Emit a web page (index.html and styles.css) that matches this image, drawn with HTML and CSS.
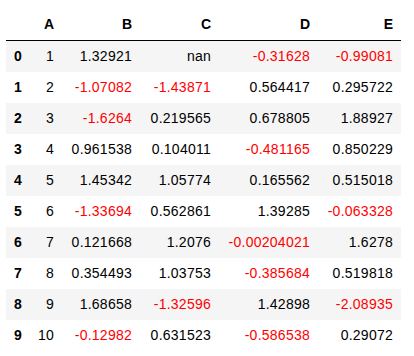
FILE: index.html
```html
<!DOCTYPE html>
<html lang="en">
<head>
  <meta charset="UTF-8" />
  <title>DataFrame</title>
  <link rel="stylesheet" href="styles.css">
</head>
<body>
  <table class="dataframe">
    <colgroup>
      <col class="col-index" />
      <col class="col-a" />
      <col class="col-b" />
      <col class="col-c" />
      <col class="col-d" />
      <col class="col-e" />
    </colgroup>
    <thead>
      <tr>
        <th class="blank"></th>
        <th>A</th>
        <th>B</th>
        <th>C</th>
        <th>D</th>
        <th>E</th>
      </tr>
    </thead>
    <tbody>
      <tr>
        <th class="row-heading">0</th>
        <td>1</td>
        <td>1.32921</td>
        <td>nan</td>
        <td class="neg">-0.31628</td>
        <td class="neg">-0.99081</td>
      </tr>
      <tr>
        <th class="row-heading">1</th>
        <td>2</td>
        <td class="neg">-1.07082</td>
        <td class="neg">-1.43871</td>
        <td>0.564417</td>
        <td>0.295722</td>
      </tr>
      <tr>
        <th class="row-heading">2</th>
        <td>3</td>
        <td class="neg">-1.6264</td>
        <td>0.219565</td>
        <td>0.678805</td>
        <td>1.88927</td>
      </tr>
      <tr>
        <th class="row-heading">3</th>
        <td>4</td>
        <td>0.961538</td>
        <td>0.104011</td>
        <td class="neg">-0.481165</td>
        <td>0.850229</td>
      </tr>
      <tr>
        <th class="row-heading">4</th>
        <td>5</td>
        <td>1.45342</td>
        <td>1.05774</td>
        <td>0.165562</td>
        <td>0.515018</td>
      </tr>
      <tr>
        <th class="row-heading">5</th>
        <td>6</td>
        <td class="neg">-1.33694</td>
        <td>0.562861</td>
        <td>1.39285</td>
        <td class="neg">-0.063328</td>
      </tr>
      <tr>
        <th class="row-heading">6</th>
        <td>7</td>
        <td>0.121668</td>
        <td>1.2076</td>
        <td class="neg">-0.00204021</td>
        <td>1.6278</td>
      </tr>
      <tr>
        <th class="row-heading">7</th>
        <td>8</td>
        <td>0.354493</td>
        <td>1.03753</td>
        <td class="neg">-0.385684</td>
        <td>0.519818</td>
      </tr>
      <tr>
        <th class="row-heading">8</th>
        <td>9</td>
        <td>1.68658</td>
        <td class="neg">-1.32596</td>
        <td>1.42898</td>
        <td class="neg">-2.08935</td>
      </tr>
      <tr>
        <th class="row-heading">9</th>
        <td>10</td>
        <td class="neg">-0.12982</td>
        <td>0.631523</td>
        <td class="neg">-0.586538</td>
        <td>0.29072</td>
      </tr>
    </tbody>
  </table>
</body>
</html>
```

FILE: styles.css
```css
body {
  margin: 0;
  background: #fff;
  font-family: "Liberation Sans", Arial, sans-serif;
  font-size: 14px;
  color: #000;
}

.dataframe {
  margin: 9px 0 0 6px;
  width: 395px;
  table-layout: fixed;
  border-collapse: separate;
  border-spacing: 0;
}

.col-index { width: 24px; }
.col-a { width: 32px; }
.col-b { width: 78px; }
.col-c { width: 79px; }
.col-d { width: 99px; }
.col-e { width: 83px; }

.dataframe th,
.dataframe td {
  padding: 7px 8px;
  line-height: 17px;
  text-align: right;
  white-space: nowrap;
}

/* widths of the hinted digits in the original */
.dataframe td {
  letter-spacing: 0.25px;
}

.dataframe th {
  font-weight: bold;
}

.dataframe thead th {
  border-bottom: 1px solid #000;
}

.dataframe .row-heading {
  text-align: left;
}

.dataframe tbody tr:nth-child(odd) {
  background: #f5f5f5;
}

.neg {
  color: #ff0000;
}
```
